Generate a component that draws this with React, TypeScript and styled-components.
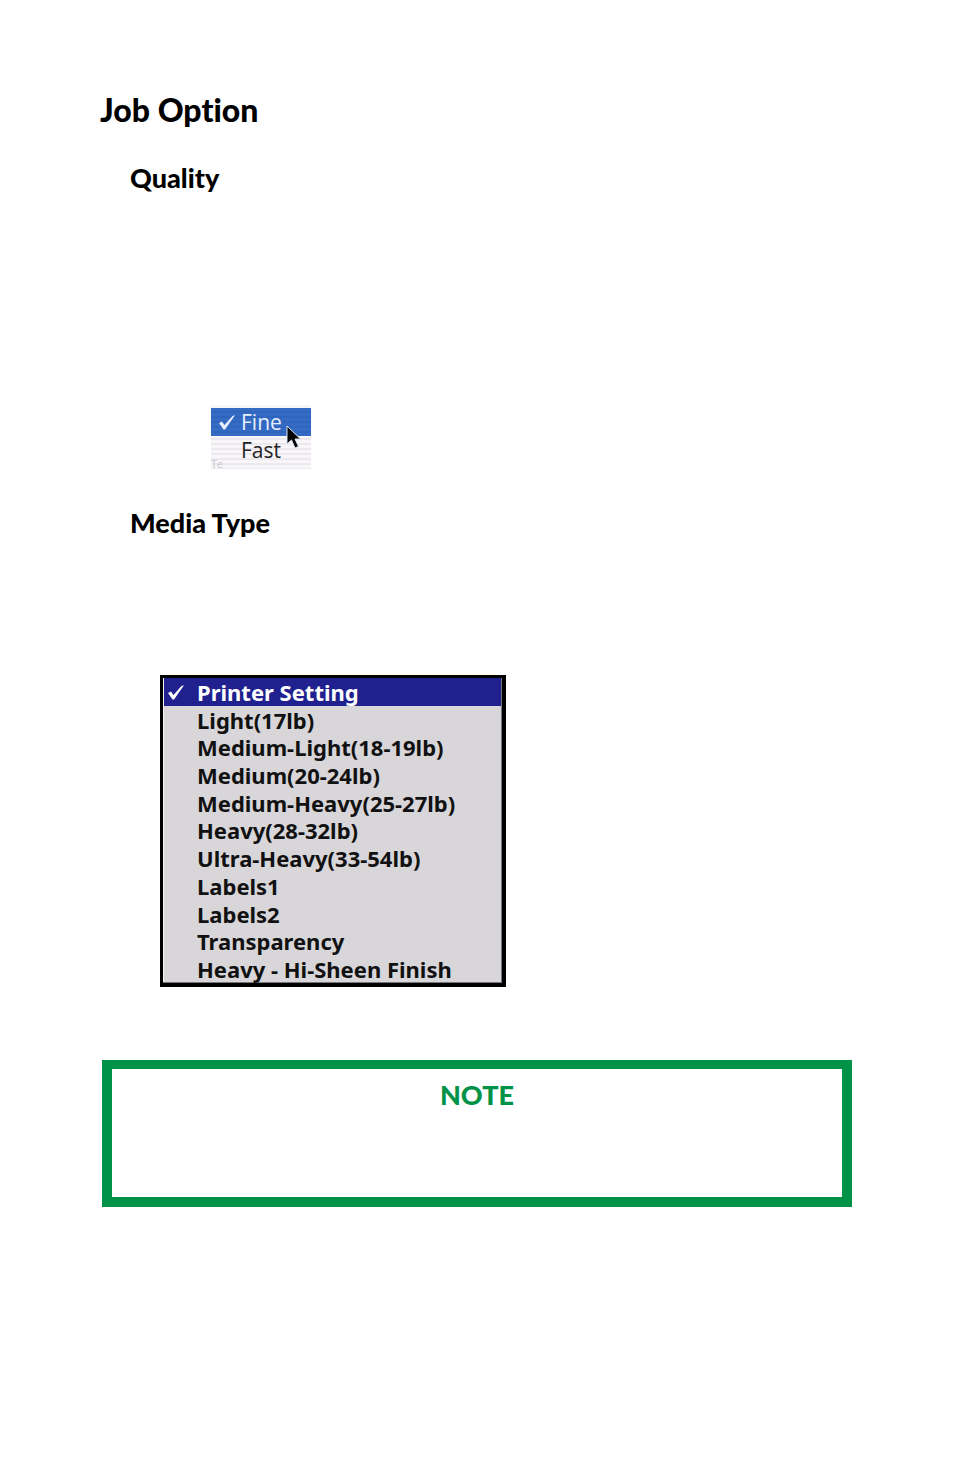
import React, { useState } from "react";
import styled, { createGlobalStyle } from "styled-components";

const GlobalStyle = createGlobalStyle`
  *, *::before, *::after { box-sizing: border-box; }
  body {
    margin: 0;
    background: #fff;
    color: #000;
    font-family: Lato, "Liberation Sans", sans-serif;
    font-variant-ligatures: none;
  }
`;

const Page = styled.main`
  padding: 90px 102px 268px 100px;
`;

const Title = styled.h1`
  margin: 0;
  font-size: 32px;
  line-height: 40px;
  font-weight: 900;
`;

const Section = styled.section<{ $gap: number; $top: number }>`
  display: flex;
  flex-direction: column;
  align-items: flex-start;
  gap: ${(p) => p.$gap}px;
  padding: ${(p) => p.$top}px 0 0 30px;
`;

const SectionTitle = styled.h2`
  margin: 0;
  font-size: 27px;
  line-height: 34px;
  font-weight: 900;
`;

const QualityMenu = styled.div`
  position: relative;
  width: 100px;
  height: 64px;
  margin-left: 81px;
  padding-top: 3px;
  background: repeating-linear-gradient(#f8f6f9 0 3px, #ece9ee 3px 5px);
`;

const QualityItem = styled.button<{ $selected: boolean }>`
  display: grid;
  grid-template-columns: 23px 1fr;
  align-items: center;
  width: 100%;
  height: 28px;
  padding: 0 0 0 7px;
  border: 0;
  text-align: left;
  font: 500 21px/28px "Open Sans", sans-serif;
  color: ${(p) => (p.$selected ? "#e6efff" : "#222")};
  background: ${(p) =>
    p.$selected ? "repeating-linear-gradient(#346bc3 0 3px, #2f65bc 3px 5px)" : "transparent"};
`;

const Ghost = styled.span`
  position: absolute;
  left: 0;
  bottom: 0;
  font: 11px/10px "Open Sans", sans-serif;
  color: #cbc8ce;
`;

const Pointer = styled.svg`
  position: absolute;
  left: 75px;
  top: 20px;
`;

const MediaMenu = styled.div`
  display: grid;
  grid-auto-rows: 1fr;
  width: 346px;
  height: 312px;
  margin-left: 30px;
  border: solid #000;
  border-width: 3px 4px 4px 3px;
  box-shadow: inset -1px -1px #77757a, inset 1px 1px #f4f3f5;
  background: #d8d6d9;
`;

const MediaItem = styled.button<{ $selected: boolean }>`
  display: grid;
  grid-template-columns: 30px 1fr;
  align-items: center;
  margin: 0 1px;
  padding: 0 0 0 3px;
  border: 0;
  text-align: left;
  white-space: nowrap;
  font: 700 22px/24px "Noto Sans", sans-serif;
  color: ${(p) => (p.$selected ? "#fff" : "#111")};
  background: ${(p) => (p.$selected ? "#20208f" : "transparent")};
`;

const Note = styled.aside`
  min-height: 147px;
  margin: 73px 0 0 2px;
  padding: 9px 10px;
  border: solid #009247;
  border-width: 9px 10px 10px;
  text-align: center;
`;

const NoteTitle = styled.h2`
  margin: 0;
  font-size: 27px;
  line-height: 34px;
  font-weight: 900;
  color: #009247;
`;

const TickMark = styled.svg`
  display: block;
`;

const Tick = () => (
  <TickMark width="18" height="18" viewBox="0 0 18 18" aria-hidden="true">
    <path d="M1 10 4 8.500 6.500 12 14.500 3 17 2.300 7 16.500 5.500 16.500Z" fill="currentColor" />
  </TickMark>
);

const mediaTypes = [
  "Printer Setting",
  "Light(17lb)",
  "Medium-Light(18-19lb)",
  "Medium(20-24lb)",
  "Medium-Heavy(25-27lb)",
  "Heavy(28-32lb)",
  "Ultra-Heavy(33-54lb)",
  "Labels1",
  "Labels2",
  "Transparency",
  "Heavy - Hi-Sheen Finish",
];

export default function App() {
  const [quality, setQuality] = useState("Fine");
  const [media, setMedia] = useState(mediaTypes[0]);

  return (
    <>
      <GlobalStyle />
      <Page>
        <Title>Job Option</Title>
        <Section $top={31} $gap={210}>
          <SectionTitle>Quality</SectionTitle>
          <QualityMenu role="menu" aria-label="Quality">
            {["Fine", "Fast"].map((name) => (
              <QualityItem
                key={name}
                role="menuitemradio"
                aria-checked={quality === name}
                $selected={quality === name}
                onClick={() => setQuality(name)}
              >
                <span>{quality === name && <Tick />}</span>
                <span>{name}</span>
              </QualityItem>
            ))}
            <Ghost aria-hidden="true">Te</Ghost>
            <Pointer width="16" height="25" viewBox="0 0 16 25" aria-hidden="true">
              <path d="M1 1V19L5.500 15 9 23 12.500 21.500 9 14H14.500Z" fill="#000" stroke="#dce6f5" />
            </Pointer>
          </QualityMenu>
        </Section>
        <Section $top={37} $gap={135}>
          <SectionTitle>Media Type</SectionTitle>
          <MediaMenu role="menu" aria-label="Media Type">
            {mediaTypes.map((name) => (
              <MediaItem
                key={name}
                role="menuitemradio"
                aria-checked={media === name}
                $selected={media === name}
                onClick={() => setMedia(name)}
              >
                <span>{media === name && <Tick />}</span>
                <span>{name}</span>
              </MediaItem>
            ))}
          </MediaMenu>
        </Section>
        <Note>
          <NoteTitle>NOTE</NoteTitle>
        </Note>
      </Page>
    </>
  );
}
